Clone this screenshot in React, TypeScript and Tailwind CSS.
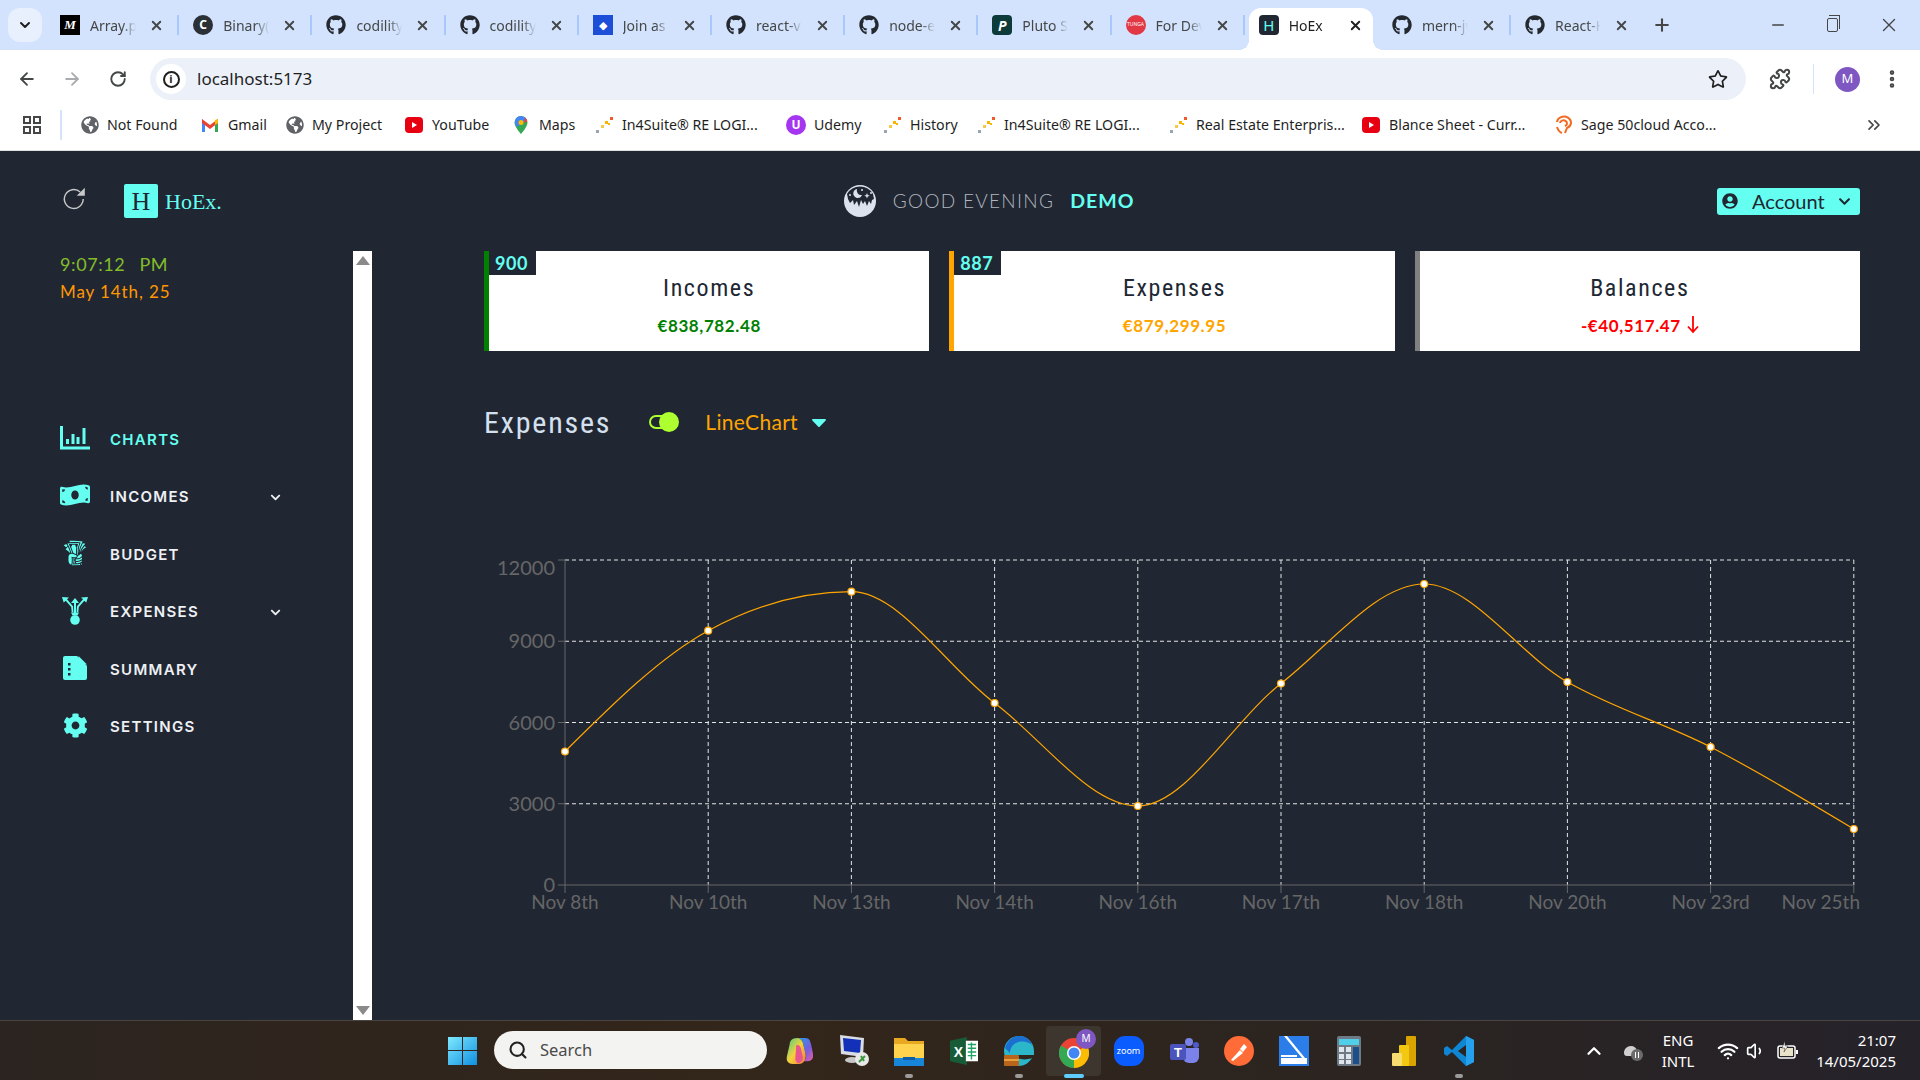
import { FC, ReactNode } from "react";
import { FaGithub, FaMoneyBillWave, FaCog, FaChevronDown, FaUserCircle, FaGlobeAmericas, FaRegStar, FaCaretDown } from "react-icons/fa";
import { GiTakeMyMoney } from "react-icons/gi";
import { LuArrowLeft, LuArrowRight, LuRotateCw, LuPuzzle, LuEllipsisVertical, LuChevronDown, LuChevronUp, LuPlus, LuX, LuMinus, LuChevronsRight, LuSearch, LuWifi, LuVolume1 } from "react-icons/lu";

const cyan = "#64fff0";

const Globe = () => <FaGlobeAmericas className="text-[#5f6368] text-[18px]" />;

const Mark: FC<{ className: string; children?: ReactNode }> = ({ className, children }) => (
    <span className={`flex items-center justify-center w-5 h-5 shrink-0 ${className}`}>{children}</span>
);

const Github = () => <FaGithub className="w-5 h-5 shrink-0 text-[#24292f]" />;

const tabs = [
    { icon: <Mark className="bg-black text-white italic text-[13px] font-bold font-['Liberation_Serif',serif]">M</Mark>, label: "Array.prototype" },
    { icon: <Mark className="bg-[#2b2f36] rounded-full text-white text-[12px] font-bold">C</Mark>, label: "Binary(" },
    { icon: <Github />, label: "codility-lessons" },
    { icon: <Github />, label: "codility-lessons" },
    { icon: <Mark className="bg-[#1d4ed8] text-white text-[11px]">◆</Mark>, label: "Join as a" },
    { icon: <Github />, label: "react-vite" },
    { icon: <Github />, label: "node-express" },
    { icon: <Mark className="bg-[#0c3b3a] rounded-sm text-white italic font-bold text-[14px]">P</Mark>, label: "Pluto Studio" },
    { icon: <Mark className="bg-[#e23744] rounded-full text-white text-[5px]">TUNGA</Mark>, label: "For Developers" },
    { icon: <Mark className="bg-[#202733] rounded-sm text-[#64fff0] text-[15px]">H</Mark>, label: "HoEx", active: true },
    { icon: <Github />, label: "mern-jwt-auth" },
    { icon: <Github />, label: "React-Hook" },
];

const Dots = () => (
    <svg viewBox="0 0 20 20" className="w-5 h-5">
        <rect x="16" y="2" width="3" height="3" fill="#f05a28" />
        <rect x="11" y="6" width="3" height="3" fill="#f7b500" />
        <rect x="14" y="8" width="2" height="2" fill="#f7b500" />
        <rect x="7" y="10" width="3" height="3" fill="#f7c948" />
        <rect x="2" y="15" width="3" height="3" fill="#9aa5b1" />
    </svg>
);

const YouTube = () => (
    <svg viewBox="0 0 20 20" className="w-5 h-5">
        <rect x="1" y="2" width="18" height="16" rx="4" fill="#e60012" />
        <path d="M8 7l5 3-5 3z" fill="#fff" />
    </svg>
);

const bookmarks = [
    { w: "w-[119px]", icon: <Globe />, label: "Not Found" },
    { w: "w-[86px]", icon: (
        <svg viewBox="0 0 20 20" className="w-5 h-5">
            <path d="M2 4v13h3V8z" fill="#4285f4" />
            <path d="M18 4v13h-3V8z" fill="#34a853" />
            <path d="M2 4l8 6 8-6v4l-8 6-8-6z" fill="#ea4335" />
            <path d="M15 5l3-1v4l-3 2z" fill="#fbbc04" />
        </svg>
    ), label: "Gmail" },
    { w: "w-[118px]", icon: <Globe />, label: "My Project" },
    { w: "w-[107px]", icon: <YouTube />, label: "YouTube" },
    { w: "w-[83px]", icon: (
        <svg viewBox="0 0 20 20" className="w-5 h-5">
            <path d="M10 1a6.5 6.5 0 0 0-6.5 6.5C3.500 12 10 19 10 19s6.500-7 6.500-11.500A6.500 6.500 0 0 0 10 1z" fill="#34a853" />
            <path d="M5 3.500A6.500 6.500 0 0 1 16 5L6 12c-2-2-3-5-1-8.500z" fill="#4285f4" />
            <circle cx="10" cy="7.500" r="2.500" fill="#fbbc04" />
            <path d="M14 2.500a6.500 6.500 0 0 1 2.400 4L13 8z" fill="#ea4335" />
        </svg>
    ), label: "Maps" },
    { w: "w-[192px]", icon: <Dots />, label: "In4Suite® RE LOGI..." },
    { w: "w-[96px]", icon: (
        <span className="flex items-center justify-center w-5 h-5 rounded-full bg-[#a435f0] text-white text-[12px] font-bold">U</span>
    ), label: "Udemy" },
    { w: "w-[94px]", icon: <Dots />, label: "History" },
    { w: "w-[192px]", icon: <Dots />, label: "In4Suite® RE LOGI..." },
    { w: "w-[193px]", icon: <Dots />, label: "Real Estate Enterpris..." },
    { w: "w-[192px]", icon: <YouTube />, label: "Blance Sheet - Curr..." },
    { w: "w-[314px]", icon: (
        <svg viewBox="0 0 20 20" className="w-5 h-5" fill="none" stroke="#f26a21" strokeWidth="2">
            <path d="M4 7a7 6 0 1 1 10 6l-2 5" />
            <path d="M7 8a3.500 3 0 1 1 5 3" />
            <path d="M4 12c1 3 2 5 5 6" />
        </svg>
    ), label: "Sage 50cloud Acco..." },
];

const Tab: FC<{ icon: ReactNode; label: string; active?: boolean; last?: boolean }> = ({ icon, label, active, last }) => (
    <div className="relative flex w-[133.200px] h-[42px] shrink-0 pl-[4px]">
        <div className={`relative flex items-center w-[124px] h-full pb-[8px] pl-[10px] rounded-t-xl ${active ? "bg-white" : ""}`}>
            {active && (
                <>
                    <span className="absolute bottom-0 left-[-10px] w-[10px] h-[10px] bg-[radial-gradient(circle_at_0_0,transparent_10px,white_10px)]" />
                    <span className="absolute bottom-0 right-[-10px] w-[10px] h-[10px] bg-[radial-gradient(circle_at_100%_0,transparent_10px,white_10px)]" />
                </>
            )}
            {icon}
            <span className={`ml-[10px] w-[46px] overflow-hidden whitespace-nowrap text-[14px] [mask-image:linear-gradient(to_right,black_70%,transparent)] ${active ? "text-[#1f1f1f]" : "text-[#444746]"}`}>{label}</span>
            <LuX className={`absolute right-[10px] w-[15px] h-[15px] stroke-[3] ${active ? "text-[#1f1f1f]" : "text-[#444746]"}`} />
        </div>
        {!active && !last && <span className="absolute top-[7px] right-0 w-[2px] h-[20px] bg-[#a8c7fa]" />}
    </div>
);

const ChartsIcon = () => (
    <svg viewBox="0 0 30 24" className="w-[30px] h-6" fill="none" stroke={cyan}>
        <path d="M1.500 0v22h28.500" strokeWidth="3" />
        <path d="M7.500 13v5M13 8v10M18 11v7M24 2v16" strokeWidth="3" />
    </svg>
);

const ExpensesIcon = () => (
    <svg viewBox="0 0 30 30" className="w-[30px] h-[30px]" fill={cyan}>
        <path d="M14 8v10h2V8h3l-4-5-4 5z" />
        <path d="M2 2l7 .5-2 1.800 6 7 .5 6h-1.800l-.5-5.200-5.500-6.300-2 1.700z" />
        <path d="M28 2l-7 .5 2 1.800-6 7-.5 6h1.800l.5-5.200 5.500-6.300 2 1.700z" />
        <path d="M11 17.500h8l-1.500 3h-5z" />
        <circle cx="15" cy="25" r="4.800" />
    </svg>
);

const SummaryIcon = () => (
    <svg viewBox="0 0 24 24" className="w-[24px] h-[24px]">
        <path d="M2 0h12l10 10v12a2 2 0 0 1-2 2H2a2 2 0 0 1-2-2V2a2 2 0 0 1 2-2z" fill={cyan} />
        <path d="M15.500 0l8.500 8.500h-8.500z" fill={cyan} />
        <rect x="5" y="7" width="2.500" height="2.500" fill="#202733" />
        <rect x="5" y="12" width="2.500" height="2.500" fill="#202733" />
        <rect x="5" y="17" width="2.500" height="2.500" fill="#202733" />
    </svg>
);

const nav = [
    { icon: <ChartsIcon />, label: "CHARTS", active: true },
    { icon: <FaMoneyBillWave className="w-[30px] h-[24px] text-[#64fff0]" />, label: "INCOMES", caret: true },
    { icon: <GiTakeMyMoney className="w-[28px] h-[28px] text-[#64fff0]" />, label: "BUDGET" },
    { icon: <ExpensesIcon />, label: "EXPENSES", caret: true },
    { icon: <SummaryIcon />, label: "SUMMARY" },
    { icon: <FaCog className="w-[25px] h-[25px] text-[#64fff0]" />, label: "SETTINGS" },
];

const cards = [
    { title: "Incomes", amount: "€838,782.48", badge: "900", border: "border-l-[#008000]", color: "text-[#008000]" },
    { title: "Expenses", amount: "€879,299.95", badge: "887", border: "border-l-[#ffa500]", color: "text-[#ffa500]" },
    { title: "Balances", amount: "-€40,517.47", border: "border-l-[#808080]", color: "text-[#ff0000]", down: true },
];

const chartLabels = ["Nov 8th", "Nov 10th", "Nov 13th", "Nov 14th", "Nov 16th", "Nov 17th", "Nov 18th", "Nov 20th", "Nov 23rd", "Nov 25th"];
const chartY = [751.5, 630.7, 591.7, 703, 806, 683.5, 584, 682, 747, 829];
const left = 565;
const step = 143.2;
const gridY = [560, 641.25, 722.5, 803.75, 885];
const yLabels = ["12000", "9000", "6000", "3000", "0"];

// same curve as recharts "monotone"
const monotonePath = (xs: number[], ys: number[]) => {
    const n = xs.length;
    const s: number[] = [];
    for (let i = 0; i < n - 1; i++) s.push((ys[i + 1] - ys[i]) / (xs[i + 1] - xs[i]));
    const t: number[] = new Array(n).fill(0);
    for (let i = 1; i < n - 1; i++) {
        const h0 = xs[i] - xs[i - 1];
        const h1 = xs[i + 1] - xs[i];
        const p = (s[i - 1] * h1 + s[i] * h0) / (h0 + h1);
        t[i] = (Math.sign(s[i - 1]) + Math.sign(s[i])) * Math.min(Math.abs(s[i - 1]), Math.abs(s[i]), 0.5 * Math.abs(p));
    }
    t[0] = (3 * s[0] - t[1]) / 2;
    t[n - 1] = (3 * s[n - 2] - t[n - 2]) / 2;
    let d = `M${xs[0]},${ys[0]}`;
    for (let i = 0; i < n - 1; i++) {
        const h = (xs[i + 1] - xs[i]) / 3;
        d += `C${xs[i] + h},${ys[i] + h * t[i]},${xs[i + 1] - h},${ys[i + 1] - h * t[i + 1]},${xs[i + 1]},${ys[i + 1]}`;
    }
    return d;
};

const LineChart = () => {
    const xs = chartLabels.map((_, i) => left + i * step);
    const right = xs[xs.length - 1];
    return (
        <svg viewBox="484 442 1376 500" className="w-[1376px] h-[500px] font-['Lato',sans-serif]">
            {gridY.slice(0, 4).map((y) => (
                <line key={y} x1={left} x2={right} y1={y} y2={y} stroke="#e5e5e5" strokeDasharray="4 3" />
            ))}
            {xs.slice(1).map((x) => (
                <line key={x} x1={x} x2={x} y1={560} y2={885} stroke="#e5e5e5" strokeDasharray="4 3" />
            ))}
            <line x1={left} x2={left} y1={560} y2={885} stroke="#666" />
            <line x1={left} x2={right} y1={885} y2={885} stroke="#666" />
            {gridY.map((y, i) => (
                <g key={y}>
                    <line x1={558} x2={left} y1={y} y2={y} stroke="#666" />
                    <text x={555} y={y + (i === 0 ? 15 : 7)} textAnchor="end" fontSize="20" fill="#666">{yLabels[i]}</text>
                </g>
            ))}
            {xs.map((x, i) => (
                <g key={x}>
                    <line x1={x} x2={x} y1={885} y2={893} stroke="#666" />
                    <text x={i === 9 ? 1860 : x} y={909} textAnchor={i === 9 ? "end" : "middle"} fontSize="19" fill="#666">{chartLabels[i]}</text>
                </g>
            ))}
            <path d={monotonePath(xs, chartY)} fill="none" stroke="#ffa500" strokeWidth="1.200" />
            {xs.map((x, i) => (
                <circle key={x} cx={x} cy={chartY[i]} r="3.500" fill="#fff" stroke="#ffa500" strokeWidth="1.200" />
            ))}
        </svg>
    );
};

const Moon = () => (
    <svg viewBox="0 0 32 32" className="w-8 h-8">
        <circle cx="16" cy="16" r="16" fill="#dde3ee" />
        <path d="M3 9a15 15 0 0 1 26 0l1 5-2 1-1 4-2-3-2 5-2-5-2 3-2-4-2 7-2-6-3 4-1-5-3 3-2-4z" fill="#202733" />
        <path d="M13 4a4.500 4.500 0 1 0 5 6 4.500 4.500 0 0 1-5-6z" fill="#dde3ee" />
        <path d="M23 8l.8 2 2 .8-2 .8-.8 2-.8-2-2-.8 2-.8z" fill="#dde3ee" />
        <circle cx="18" cy="5" r="1" fill="#dde3ee" />
        <circle cx="27" cy="8" r="1" fill="#dde3ee" />
        <circle cx="6" cy="10" r="1" fill="#dde3ee" />
    </svg>
);

const Cell: FC<{ children: ReactNode; dot?: boolean; running?: boolean }> = ({ children, dot, running }) => (
    <div className={`relative flex items-center justify-center w-[55px] h-[50px] rounded ${running ? "bg-[#3d362f]" : ""}`}>
        {children}
        {dot && <span className="absolute bottom-[-2px] w-[8px] h-[4px] rounded-full bg-[#9b9b9b]" />}
        {running && <span className="absolute bottom-[-2px] w-[20px] h-[4px] rounded-full bg-[#60cdff]" />}
    </div>
);

const Taskbar = () => (
    <div className="flex items-center h-[60px] pl-[448px] bg-[linear-gradient(to_right,#2c2420,#33261a_40%,#2b2420_70%,#25222a)] border-t border-[#4a4541]">
        <svg viewBox="0 0 29 29" className="w-[29px] h-[29px]">
            <defs>
                <linearGradient id="win" x1="0" y1="0" x2="1" y2="1"><stop offset="0" stopColor="#7fe9ff" /><stop offset="1" stopColor="#0f8fe0" /></linearGradient>
            </defs>
            <path d="M0 1h14v13H0zM15 1h14v13H15zM0 15h14v14H0zM15 15h14v14H15z" fill="url(#win)" />
        </svg>
        <div className="flex items-center w-[273px] h-[38px] ml-[17px] mr-[4px] pl-[14px] mb-[1px] rounded-full bg-[#f3f3f1] text-[#4a4a4a] text-[16.500px]">
            <LuSearch className="w-[20px] h-[20px] text-[#222] stroke-[2.500]" />
            <span className="ml-[12px]">Search</span>
        </div>
        <Cell>
            <svg viewBox="0 0 30 30" className="w-[28px] h-[30px]">
                <defs>
                    <linearGradient id="cop1" x1="0" y1="0" x2="1" y2="1"><stop offset="0" stopColor="#18a5e8" /><stop offset=".6" stopColor="#7a5be0" /><stop offset="1" stopColor="#f0609a" /></linearGradient>
                    <linearGradient id="cop2" x1="0" y1="0" x2="1" y2="1"><stop offset="0" stopColor="#3fd08a" /><stop offset=".5" stopColor="#f5d13b" /><stop offset="1" stopColor="#f07a3c" /></linearGradient>
                </defs>
                <path d="M13 1h9c4 0 5 3 6 7l2 10c1 5-2 8-6 8h-5c3-1 4-4 3-8l-3-12c-.6-3-3-5-6-5z" fill="url(#cop1)" />
                <path d="M5 8c0-4 3-7 8-7 3 0 5 2 6 5l3 12c1 6-2 11-7 11H8c-4 0-7-3-6-8z" fill="url(#cop2)" />
                <path d="M12 9c2-1 4 0 5 3l2 9c.6 3-1 6-4 7-2 .4-3-2-4-4z" fill="#e8568f" />
            </svg>
        </Cell>
        <Cell>
            <svg viewBox="0 0 30 34" className="w-[30px] h-[34px]">
                <path d="M1 1l24 3-1 19-22-3z" fill="#d9dde3" />
                <path d="M4 4l18 2-1 13-16-2z" fill="#1330b8" />
                <ellipse cx="13" cy="26" rx="7" ry="3" fill="#c7c7c7" />
                <circle cx="23" cy="25" r="7" fill="#e8e8e8" />
                <path d="M20 28l6-6M22 22l3 5" stroke="#3c9a3c" strokeWidth="2" />
            </svg>
        </Cell>
        <Cell dot>
            <svg viewBox="0 0 30 30" className="w-[30px] h-[30px]">
                <path d="M0 2h11l3 3h16v25H0z" fill="#e8a822" />
                <path d="M0 8h30v22H0z" fill="#ffd34d" />
                <rect x="0" y="22" width="30" height="8" fill="#1785d8" />
                <rect x="9" y="21" width="12" height="3" fill="#0f5fa8" />
            </svg>
        </Cell>
        <Cell>
            <svg viewBox="0 0 30 30" className="w-[28px] h-[28px]">
                <path d="M0 4l18-4v30L0 26z" fill="#185c37" />
                <rect x="17" y="4" width="13" height="22" fill="#fff" />
                <path d="M19 8h9M19 12h9M19 16h9M19 20h9M23 6v18" stroke="#21a366" strokeWidth="1.500" />
                <text x="4" y="21" fontSize="15" fontWeight="bold" fill="#fff" fontFamily="Liberation Sans, sans-serif">X</text>
            </svg>
        </Cell>
        <Cell dot>
            <svg viewBox="0 0 30 30" className="w-[30px] h-[30px]">
                <path d="M15 0a15 15 0 0 1 15 15v4H12c0 4 8 6 16 3-3 5-8 8-13 8A15 15 0 0 1 15 0z" fill="#2bb7c9" />
                <path d="M1 12C3 5 9 0 15 0c6 0 11 3 13 9-4-4-14-5-19 0-2 2-3 5-3 8z" fill="#1b6fd1" />
                <rect x="0" y="19" width="15" height="11" rx="1" fill="#b8661c" />
                <rect x="0" y="23" width="15" height="2" fill="#e8a03c" />
            </svg>
        </Cell>
        <Cell running>
            <svg viewBox="0 0 30 30" className="w-[30px] h-[30px] mt-[4px]">
                <circle cx="15" cy="15" r="15" fill="#ea4335" />
                <path d="M15 15L28 7.500a15 15 0 0 1-13 22.500z" fill="#fbbc04" />
                <path d="M15 15l0 15A15 15 0 0 1 2 7.500z" fill="#34a853" />
                <circle cx="15" cy="15" r="7" fill="#fff" />
                <circle cx="15" cy="15" r="5.500" fill="#4285f4" />
            </svg>
            <span className="absolute top-[3px] right-[5px] flex items-center justify-center w-[20px] h-[20px] rounded-full bg-[#7e57c2] text-white text-[10px]">M</span>
        </Cell>
        <Cell>
            <span className="flex items-center justify-center w-[30px] h-[30px] rounded-[11px] bg-[#0b5cff] text-white text-[9px]">zoom</span>
        </Cell>
        <Cell>
            <svg viewBox="0 0 30 30" className="w-[30px] h-[30px]">
                <circle cx="20" cy="6" r="4" fill="#7b83eb" />
                <circle cx="27" cy="9" r="3" fill="#5059c9" />
                <path d="M14 12h16v9a6 6 0 0 1-6 6h-4a6 6 0 0 1-6-6z" fill="#7b83eb" />
                <rect x="1" y="8" width="16" height="16" rx="2" fill="#4b53bc" />
                <text x="9" y="21" textAnchor="middle" fontSize="13" fontWeight="bold" fill="#fff" fontFamily="Liberation Sans, sans-serif">T</text>
            </svg>
        </Cell>
        <Cell>
            <svg viewBox="0 0 30 30" className="w-[30px] h-[30px]">
                <circle cx="15" cy="15" r="15" fill="#ff6c37" />
                <path d="M7 24l9-10 3 3-10 8zM16 13l4-5 3 3-4 5z" fill="#fff" />
            </svg>
        </Cell>
        <Cell>
            <svg viewBox="0 0 30 30" className="w-[30px] h-[30px]">
                <rect width="30" height="30" fill="#2b7de9" />
                <path d="M8 0l18 22H23L5 0z" fill="#fff" />
                <rect x="2" y="22" width="26" height="6" fill="#fff" />
                <rect x="2" y="19" width="16" height="2" fill="#fff" />
            </svg>
        </Cell>
        <Cell>
            <svg viewBox="0 0 24 30" className="w-[24px] h-[30px]">
                <rect width="24" height="30" rx="2" fill="#6e7b87" />
                <rect x="2" y="3" width="20" height="6" fill="#4fd0e8" />
                <path d="M2 11h5v5H2zM9 11h5v5H9zM2 18h5v5H2zM9 18h5v5H9zM2 24h5v4H2zM9 24h5v4H9z" fill="#dfe5ea" />
                <path d="M16 11h6v17h-6z" fill="#1d4f8a" />
            </svg>
        </Cell>
        <Cell>
            <svg viewBox="0 0 24 30" className="w-[24px] h-[30px]">
                <rect x="14" y="0" width="10" height="30" rx="1" fill="#d9a300" />
                <rect x="7" y="9" width="10" height="21" rx="1" fill="#f2c811" />
                <rect x="0" y="17" width="10" height="13" rx="1" fill="#f7dc6f" />
            </svg>
        </Cell>
        <Cell dot>
            <svg viewBox="0 0 30 30" className="w-[30px] h-[30px]">
                <path d="M22 0l8 4v22l-8 4L8 16l-5 4-3-2V12l3-2 5 4zM22 9l-8 6 8 6z" fill="#0e86d4" />
                <path d="M22 0l8 4v22l-8 4z" fill="#24a0ed" />
            </svg>
        </Cell>
        <div className="flex items-center ml-[97px] text-white">
            <LuChevronUp className="w-[22px] h-[22px] stroke-[2.500]" />
            <svg viewBox="0 0 22 20" className="w-[22px] h-[20px] ml-[17px]">
                <path d="M2 12c0-4 3-7 7-7 3 0 5 2 6 4l4 6H5c-2 0-3-1-3-3z" fill="#cfcfcf" />
                <circle cx="15" cy="14" r="6" fill="#6b6b6b" />
                <path d="M13.500 11v6M16.500 11v6" stroke="#fff" strokeWidth="1" />
            </svg>
            <div className="flex flex-col items-center w-[60px] ml-[4px] text-[15px] leading-[21px]">
                <span>ENG</span>
                <span>INTL</span>
            </div>
            <LuWifi className="w-[22px] h-[22px] ml-[9px] stroke-[2.500]" />
            <LuVolume1 className="w-[20px] h-[20px] ml-[7px]" />
            <svg viewBox="0 0 22 20" className="w-[22px] h-[20px] ml-[11px]">
                <rect x="1" y="5" width="17" height="12" rx="2" fill="none" stroke="#fff" strokeWidth="1.500" />
                <rect x="3" y="7" width="13" height="8" fill="#e8e2c8" />
                <rect x="19" y="9" width="2" height="4" fill="#fff" />
                <path d="M8 0L5 7h3l-1 4 4-6H8z" fill="#fff" stroke="#2a2420" strokeWidth=".5" />
            </svg>
            <div className="flex flex-col items-end w-[97px] text-[15px] leading-[21px]">
                <span>21:07</span>
                <span>14/05/2025</span>
            </div>
        </div>
    </div>
);

const App = () => {
    return (
        <div className="flex flex-col w-[1920px] h-[1080px] overflow-hidden font-['Noto_Sans',sans-serif]">
            {/* browser tab strip */}
            <div className="flex items-end h-[50px] bg-[#d3e3fd]">
                <div className="flex items-center justify-center w-[34px] h-[34px] ml-[8px] mb-[8px] rounded-xl bg-[#e9f0fd]">
                    <LuChevronDown className="w-[16px] h-[16px] stroke-[3] text-[#1f1f1f]" />
                </div>
                <div className="flex ml-[4px]">
                    {tabs.map((t, i) => (
                        <Tab key={i} icon={t.icon} label={t.label} active={t.active} last={i === tabs.length - 1} />
                    ))}
                </div>
                <div className="flex items-center h-[42px] pb-[8px] ml-[8px] text-[#444746]">
                    <LuPlus className="w-[20px] h-[20px] stroke-[2.500]" />
                    <LuMinus className="w-[18px] h-[18px] ml-[97px]" />
                    <span className="relative w-[11px] h-[14px] ml-[40px] border-[1.500px] border-[#444746] rounded-[2px] before:absolute before:top-[-4px] before:left-[1px] before:w-[11px] before:h-[14px] before:border-t-[1.500px] before:border-r-[1.500px] before:border-[#444746]" />
                    <LuX className="w-[22px] h-[22px] ml-[40px] stroke-[1.500]" />
                </div>
            </div>
            {/* address bar */}
            <div className="flex items-center h-[50px] pt-[8px] bg-white rounded-t-lg">
                <LuArrowLeft className="w-[20px] h-[20px] ml-[17px] text-[#444746] stroke-[2.200]" />
                <LuArrowRight className="w-[20px] h-[20px] ml-[25px] text-[#a9acaf] stroke-[2.200]" />
                <LuRotateCw className="w-[18px] h-[18px] ml-[27px] text-[#444746] stroke-[2.500]" />
                <div className="flex items-center w-[1596px] h-[42px] ml-[23px] pl-[6px] rounded-full bg-[#ecf1f9]">
                    <span className="flex items-center justify-center w-[30px] h-[30px] rounded-full bg-white text-[13px] text-[#1f1f1f]">
                        <span className="flex items-center justify-center w-[17px] h-[17px] rounded-full border-2 border-[#1f1f1f] text-[11px] font-bold">i</span>
                    </span>
                    <span className="ml-[11px] text-[17px] text-[#1f1f1f]">localhost:5173</span>
                    <FaRegStar className="w-[20px] h-[20px] ml-auto mr-[18px] text-[#1f1f1f]" />
                </div>
                <LuPuzzle className="w-[22px] h-[22px] ml-[23px] text-[#444746] stroke-[2.200]" />
                <span className="w-[1px] h-[30px] ml-[22px] bg-[#d3e3fd]" />
                <span className="flex items-center justify-center w-[25px] h-[25px] ml-[21px] rounded-full bg-[#7e57c2] text-white text-[13px]">M</span>
                <LuEllipsisVertical className="w-[22px] h-[22px] ml-[21px] text-[#444746] stroke-[3]" />
            </div>
            {/* bookmarks */}
            <div className="flex items-center h-[51px] bg-white text-[#1f1f1f] text-[14.200px] border-b border-[#e0e0e0]">
                <svg viewBox="0 0 20 20" className="w-[20px] h-[20px] ml-[22px]" fill="none" stroke="#444746" strokeWidth="2">
                    <rect x="2" y="2" width="6" height="6" />
                    <rect x="12" y="2" width="6" height="6" />
                    <rect x="2" y="12" width="6" height="6" />
                    <rect x="12" y="12" width="6" height="6" />
                </svg>
                <span className="w-[2px] h-[30px] ml-[18px] mr-[19px] bg-[#d3e3fd]" />
                {bookmarks.map((b, i) => (
                    <div key={i} className={`flex items-center gap-[8px] shrink-0 whitespace-nowrap ${b.w}`}>
                        {b.icon}
                        <span>{b.label}</span>
                    </div>
                ))}
                <LuChevronsRight className="w-[20px] h-[20px] ml-[-3px] text-[#444746]" />
            </div>
            {/* page */}
            <div className="flex flex-col flex-1 min-h-0 bg-[#202733]">
                <header className="flex items-center h-[100px] shrink-0">
                    <svg viewBox="0 0 24 24" className="w-[26px] h-[26px] ml-[61px] mb-[4px]" fill="none" stroke="#c8c8c8" strokeWidth="1.300">
                        <path d="M20.500 12a8.700 8.700 0 1 1-2.800-6.400" />
                        <path d="M22 1.500V9h-7.500z" fill="#c8c8c8" stroke="none" />
                    </svg>
                    <span className="flex items-center justify-center w-[34px] h-[34px] ml-[37px] rounded-[2px] bg-[#64fff0] text-[#202733] text-[26px] font-['Liberation_Serif',serif]">H</span>
                    <span className="ml-[7px] text-[22px] text-[#64fff0] font-['Liberation_Serif',serif]">HoEx.</span>
                    <div className="flex items-center ml-[622px]">
                        <Moon />
                        <span className="ml-[17px] text-[19px] font-light tracking-[1.300px] text-[#b0b5bd] font-['Lato',sans-serif]">GOOD EVENING</span>
                        <span className="ml-[16px] text-[19.500px] font-bold tracking-[1px] text-[#64fff0] font-['Lato',sans-serif]">DEMO</span>
                    </div>
                    <button className="flex items-center w-[143px] h-[27px] ml-auto mr-[60px] pl-[5px] rounded-[3px] bg-[#64fff0] text-[#202733] text-[20px] font-['Lato',sans-serif]">
                        <FaUserCircle className="w-[16px] h-[16px]" />
                        <span className="ml-[14px]">Account</span>
                        <FaChevronDown className="w-[13px] h-[13px] ml-[13px]" />
                    </button>
                </header>
                <div className="flex flex-1 min-h-0">
                    <aside className="flex flex-col w-[353px] shrink-0 pl-[60px]">
                        <div className="text-[18px] leading-[27px] tracking-[0.600px] text-[#84bd2a] font-['Lato',sans-serif]">9:07:12<span className="ml-[14px]">PM</span></div>
                        <div className="text-[17px] leading-[27px] tracking-[0.900px] text-[#ff9800] font-['Lato',sans-serif]">May 14th, 25</div>
                        <nav className="flex flex-col mt-[106px]">
                            {nav.map((n) => (
                                <div key={n.label} className="flex items-center h-[57.500px] pr-[72px]">
                                    <span className="flex items-center justify-center w-[30px] mb-[4px]">{n.icon}</span>
                                    <span className={`ml-[20px] text-[15px] font-semibold tracking-[1.300px] font-['Inter',sans-serif] ${n.active ? "text-[#64fff0]" : "text-[#eef0f4]"}`}>{n.label}</span>
                                    {n.caret && <FaChevronDown className="w-[11px] h-[11px] ml-auto text-[#eef0f4]" />}
                                </div>
                            ))}
                        </nav>
                    </aside>
                    <div className="flex flex-col justify-between items-center w-[19px] shrink-0 py-[5px] bg-white">
                        <span className="w-0 h-0 border-x-[7px] border-x-transparent border-b-[9px] border-b-[#8a8a8a]" />
                        <span className="w-0 h-0 border-x-[7px] border-x-transparent border-t-[9px] border-t-[#8a8a8a]" />
                    </div>
                    <main className="flex flex-col flex-1 min-w-0 pl-[112px] pr-[60px]">
                        <div className="grid grid-cols-3 gap-[20px]">
                            {cards.map((c) => (
                                <div key={c.title} className={`relative flex flex-col items-center h-[100px] bg-white border-l-[5px] ${c.border}`}>
                                    {c.badge && (
                                        <span className="absolute top-0 left-0 w-[47px] h-[24px] pl-[6px] bg-[#202733] text-[#64fff0] text-[18px] leading-[24px] font-bold font-['Lato',sans-serif] tracking-[0.500px]">{c.badge}</span>
                                    )}
                                    <h2 className="mt-[21px] text-[24px] leading-[32px] tracking-[1.600px] text-[#202733] font-['Roboto',sans-serif] [font-stretch:75%]">{c.title}</h2>
                                    <div className={`flex items-center mt-[10px] text-[17px] leading-[24px] font-bold tracking-[0.600px] font-['Lato',sans-serif] ${c.color}`}>
                                        {c.amount}
                                        {c.down && (
                                            <svg viewBox="0 0 12 18" className="w-[12px] h-[18px] ml-[6px] mb-[2px]" fill="none" stroke="#ff0000" strokeWidth="1.800">
                                                <path d="M6 0v16M1 10.500L6 16l5-5.500" />
                                            </svg>
                                        )}
                                    </div>
                                </div>
                            ))}
                        </div>
                        <div className="flex items-center h-[40px] mt-[51px]">
                            <h1 className="text-[30px] tracking-[1.800px] text-[#d5e0ee] font-['Roboto',sans-serif] [font-stretch:75%]">Expenses</h1>
                            <svg viewBox="0 0 30 20" className="w-[30px] h-[20px] ml-[38px]">
                                <rect x="1" y="4" width="24" height="12" rx="6" fill="none" stroke="#adff2f" strokeWidth="2" />
                                <circle cx="20" cy="10" r="10" fill="#adff2f" />
                            </svg>
                            <span className="ml-[26px] text-[21px] text-[#ffa500] font-['Lato',sans-serif] tracking-[0.300px]">LineChart</span>
                            <FaCaretDown className="w-[24px] h-[24px] ml-[9px] text-[#64fff0]" />
                        </div>
                        <LineChart />
                    </main>
                </div>
            </div>
            <Taskbar />
        </div>
    );
};

export default App;
